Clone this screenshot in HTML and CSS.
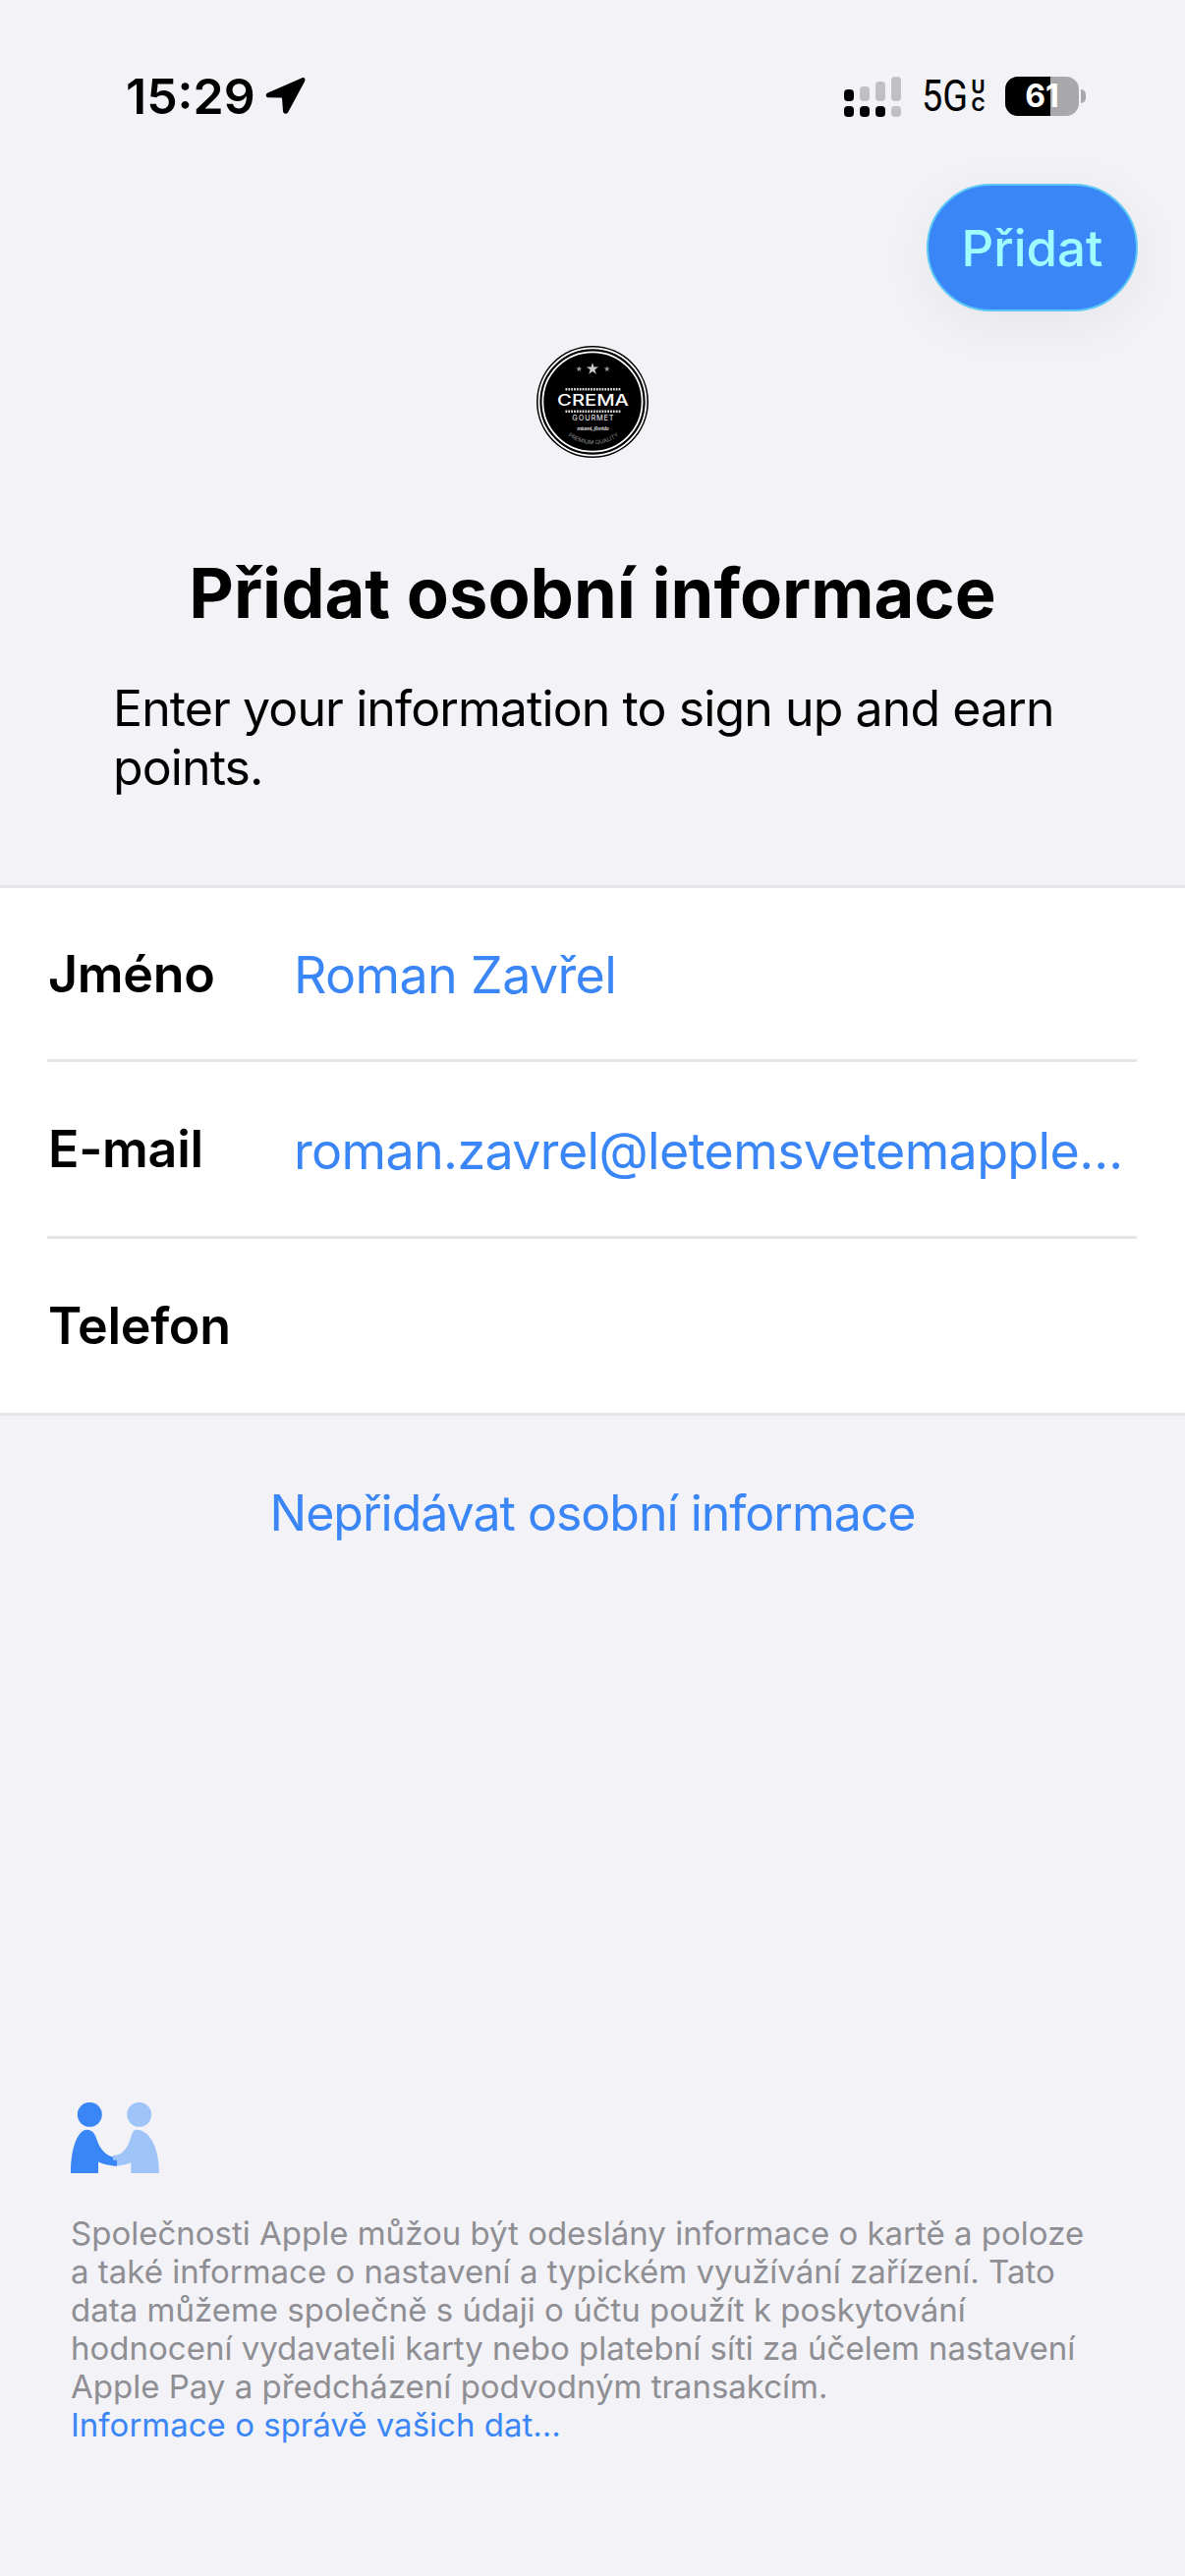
FILE: index.html
```html
<!DOCTYPE html>
<html lang="cs">
<head>
<meta charset="utf-8">
<title>Přidat osobní informace</title>
<link rel="stylesheet" href="styles.css">
</head>
<body>
<div class="screen">
  <header class="status">
    <div class="status-left">
      <span class="time">15:29</span>
      <svg class="loc" width="42" height="40" viewBox="0 0 42 40"><path d="M38.500 1.200 3.500 16.500c-2.800 1.300-2 4.800 1 4.800L18 21.500l1 13.500c.2 3.200 4 3.800 5.300 1L41 5c1.200-2.700-.3-4.700-2.500-3.800Z" fill="#000"/></svg>
    </div>
    <div class="status-right">
      <svg class="signal" width="58" height="41" viewBox="0 0 58 41">
        <rect x="0" y="13" width="10" height="12" rx="4" fill="#000"/>
        <rect x="16" y="10" width="10" height="15" rx="4" fill="#c0c0c6"/>
        <rect x="32" y="5" width="10" height="20" rx="4" fill="#c0c0c6"/>
        <rect x="48" y="0" width="10" height="25" rx="4" fill="#c0c0c6"/>
        <rect x="0" y="30" width="10" height="11" rx="4" fill="#000"/>
        <rect x="16" y="30" width="10" height="11" rx="4" fill="#000"/>
        <rect x="32" y="30" width="10" height="11" rx="4" fill="#000"/>
        <rect x="48" y="30" width="10" height="11" rx="4" fill="#c0c0c6"/>
      </svg>
      <span class="net"><span class="net-main">5G</span><span class="uc"><span>U</span><span>C</span></span></span>
      <div class="battery-wrap">
        <div class="battery"><div class="battery-fill"></div><span class="battery-num">61</span></div>
        <div class="battery-cap"></div>
      </div>
    </div>
  </header>

  <div class="action-row">
    <button class="add-btn">Přidat</button>
  </div>

  <div class="logo-row">
    <svg class="logo" width="114" height="114" viewBox="0 0 116 116">
      <defs>
        <path id="star" d="M58 17.500 59.500 22 64.200 22 60.400 24.800 61.800 29.300 58 26.500 54.200 29.300 55.600 24.800 51.800 22 56.500 22Z"/>
        <path id="arc" d="M24 84A43 43 0 0 0 94 84"/>
      </defs>
      <circle cx="58" cy="58" r="58" fill="#000"/>
      <circle cx="58" cy="58" r="55.500" fill="none" stroke="#fff" stroke-width="1.800"/>
      <circle cx="58" cy="58" r="51.500" fill="none" stroke="#fff" stroke-width="1.800"/>
      <use href="#star" fill="#ccc"/>
      <use href="#star" fill="#999" transform="translate(44 24) scale(.5) translate(-58 -24)"/>
      <use href="#star" fill="#999" transform="translate(73 24) scale(.5) translate(-58 -24)"/>
      <path d="M30 45h57" stroke="#ddd" stroke-width="2.500" stroke-dasharray="1.800 1.100"/>
      <text x="58.500" y="62" class="logo-main" text-anchor="middle" textLength="74" lengthAdjust="spacingAndGlyphs">CREMA</text>
      <path d="M30 68h57" stroke="#ddd" stroke-width="2.500" stroke-dasharray="1.800 1.100"/>
      <text x="58.500" y="77" class="logo-sub" text-anchor="middle" textLength="43">GOURMET</text>
      <text x="58.500" y="88" class="logo-script" text-anchor="middle" textLength="33">miami, florida</text>
      <text class="logo-arc"><textPath href="#arc" startOffset="50%" text-anchor="middle">PREMIUM QUALITY</textPath></text>
    </svg>
  </div>

  <h1 class="title">Přidat osobní informace</h1>
  <p class="subtitle">Enter your information to sign up and earn points.</p>

  <section class="form">
    <div class="row"><span class="label">Jméno</span><span class="value">Roman Zavřel</span></div>
    <div class="row"><span class="label">E-mail</span><span class="value">roman.zavrel@letemsvetemapple…</span></div>
    <div class="row"><span class="label">Telefon</span><span class="value"></span></div>
  </section>

  <a class="skip">Nepřidávat osobní informace</a>

  <footer class="privacy">
    <svg class="people" width="90" height="72" viewBox="0 0 90 72">
      <circle cx="69.700" cy="12.300" r="12.500" fill="#9fc5f8"/>
      <path d="M43 54c8 0 14-6 17-15 2-6 3-11.300 7-11.300 12 0 23 16 23 44.300H61.300V61.300C56 63.500 50 64.700 43 64.700Z" fill="#9fc5f8"/>
      <circle cx="19.300" cy="12.300" r="12.500" fill="#3b86f7"/>
      <path d="M0 72C0 44 8 27.700 16.300 27.700c6.500 0 8.700 5 10.700 11.300 2.500 8 9 15 16 16.500v3.200h4v6C40 64.500 34 63 28 60.500V72Z" fill="#3b86f7"/>
    </svg>
    <p class="privacy-text">Společnosti Apple můžou být odeslány informace o kartě a poloze a také informace o nastavení a typickém využívání zařízení. Tato data můžeme společně s údaji o účtu použít k poskytování hodnocení vydavateli karty nebo platební síti za účelem nastavení Apple Pay a předcházení podvodným transakcím.<br><a class="privacy-link">Informace o správě vašich dat…</a></p>
  </footer>
</div>
</body>
</html>
```
FILE: styles.css
```css
* { box-sizing: border-box; }
html, body { margin: 0; padding: 0; }
body { background: #f2f2f7; font-family: Inter, "Liberation Sans", sans-serif; color: #000; }
.screen { width: 1206px; height: 2622px; display: flex; flex-direction: column; overflow: hidden; }

.status { height: 187px; padding: 68px 101px 0 128px; display: flex; justify-content: space-between; align-items: flex-start; margin-bottom: -187px; }
.status-left { display: flex; align-items: center; gap: 9px; height: 60px; }
.time { font-size: 50px; font-weight: 600; line-height: 60px; }
.loc { margin-top: -1px; }
.status-right { display: flex; align-items: center; height: 60px; }
.signal { display: block; }
.net { display: flex; align-items: center; margin-left: 21px; }
.net-main { display: block; width: 50px; font-family: Roboto, sans-serif; font-size: 44px; font-weight: 400; line-height: 44px; transform: scaleX(.86); transform-origin: left center; white-space: nowrap; }
.uc { display: flex; flex-direction: column; font-size: 19px; font-weight: 700; line-height: 18px; width: 15px; text-align: center; }
.battery-wrap { display: flex; align-items: center; margin-left: 20px; }
.battery { position: relative; width: 75px; height: 40px; border-radius: 13px; background: #a9a9ad; overflow: hidden; }
.battery-fill { width: 61%; height: 100%; background: #000; }
.battery-num { position: absolute; inset: 0; text-align: center; color: #fff; font-size: 32px; font-weight: 700; line-height: 40px; }
.battery-cap { width: 5px; height: 14px; background: #a9a9ad; border-radius: 0 7px 7px 0; margin-left: 2px; }

.action-row { padding: 187px 48px 0 0; display: flex; justify-content: flex-end; }
.add-btn { width: 215px; height: 130px; border-radius: 65px; border: 2px solid #5cc8f6; background: #3b86f7; color: #a0fdff; font: 500 51px/1 Inter, "Liberation Sans", sans-serif; padding: 0; box-shadow: 0 12px 60px rgba(0,0,0,.06); }

.logo-row { display: flex; justify-content: center; margin-top: 35px; }
.logo { display: block; }
.logo-main { font: 500 15.500px Inter, sans-serif; fill: #fff; }
.logo-sub { font: 500 7.500px Inter, sans-serif; fill: #ddd; }
.logo-script { font: italic 700 6.500px "Liberation Serif", serif; fill: #ccc; }
.logo-arc { font: 500 6px Inter, sans-serif; fill: #777; }

.title { margin: 93px 0 0; text-align: center; font-size: 70.400px; font-weight: 700; line-height: 90px; }
.subtitle { margin: 42px 0 0; padding: 0 90px 0 115px; font-size: 50px; font-weight: 400; line-height: 60px; letter-spacing: -.9px; }

.form { margin-top: 90px; background: #fff; border-top: 3px solid #e5e5ea; border-bottom: 3px solid #e5e5ea; padding: 0 49px 0 48px; }
.row { height: 174px; display: flex; align-items: center; }
.row + .row { border-top: 3px solid #e5e5ea; height: 180px; }
.label { width: 251px; padding-left: 1px; font-size: 52px; font-weight: 600; letter-spacing: -.3px; flex: none; }
.value { padding-top: 3px; font-size: 52px; color: #3b86f7; white-space: nowrap; letter-spacing: -.65px; }

.skip { display: block; margin-top: 69px; text-align: center; font-size: 50px; line-height: 60px; letter-spacing: -1px; color: #3b86f7; }

.privacy { margin-top: auto; padding: 0 81px 134px 72px; }
.people { display: block; margin-bottom: 42px; }
.privacy-text { margin: 0; font-size: 33px; line-height: 39px; color: #8e8e93; }
.privacy-link { color: #3b86f7; }
```
